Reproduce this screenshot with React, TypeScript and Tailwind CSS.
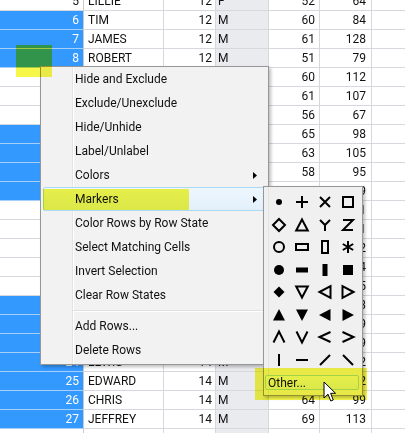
import React from 'react';

type Row = [number, string, number, string, number, number];

const rows: Row[] = [
  [5, 'LILLIE', 12, 'F', 52, 64],
  [6, 'TIM', 12, 'M', 60, 84],
  [7, 'JAMES', 12, 'M', 61, 128],
  [8, 'ROBERT', 12, 'M', 51, 79],
  [9, 'BARBARA', 13, 'F', 60, 112],
  [10, 'ALICE', 13, 'F', 61, 107],
  [11, 'SUSAN', 13, 'F', 56, 67],
  [12, 'JOHN', 13, 'M', 65, 98],
  [13, 'JOE', 13, 'M', 63, 105],
  [14, 'MICHAEL', 13, 'M', 58, 95],
  [15, 'DAVID', 13, 'M', 59, 79],
  [16, 'JUDY', 14, 'F', 61, 81],
  [17, 'ELIZABETH', 14, 'F', 62, 91],
  [18, 'LESLIE', 14, 'F', 65, 142],
  [19, 'CAROL', 14, 'F', 63, 84],
  [20, 'PATTY', 14, 'F', 62, 85],
  [21, 'FREDERICK', 14, 'M', 63, 93],
  [22, 'ALFRED', 14, 'M', 64, 99],
  [23, 'HENRY', 14, 'M', 65, 119],
  [24, 'LEWIS', 14, 'M', 64, 92],
  [25, 'EDWARD', 14, 'M', 68, 112],
  [26, 'CHRIS', 14, 'M', 64, 99],
  [27, 'JEFFREY', 14, 'M', 69, 113],
  [28, 'MARY', 15, 'F', 62, 92],
];

const S = { stroke: '#000', strokeWidth: 2, fill: 'none' } as const;
const F = { fill: '#000' } as const;

function markerShape(k: number) {
  switch (k) {
    case 0: return <circle cx="8" cy="8" r="3" {...F} />;
    case 1: return <path d="M2 8H14M8 2V14" {...S} />;
    case 2: return <path d="M3 3L13 13M13 3L3 13" {...S} />;
    case 3: return <rect x="3" y="3" width="10" height="10" {...S} />;
    case 4: return <polygon points="8,2 14,8 8,14 2,8" {...S} />;
    case 5: return <polygon points="8,2.5 13.8,13.5 2.2,13.5" {...S} />;
    case 6: return <path d="M3 3L8 8L13 3M8 8V14" {...S} />;
    case 7: return <path d="M3 3H13L3 13H13" {...S} />;
    case 8: return <circle cx="8" cy="8" r="5" {...S} />;
    case 9: return <rect x="2" y="5" width="12" height="6" {...S} />;
    case 10: return <rect x="5" y="2" width="6" height="12" {...S} />;
    case 11: return <path d="M8 2V14M2.8 5L13.2 11M13.2 5L2.8 11" {...S} />;
    case 12: return <circle cx="8" cy="8" r="5" {...F} />;
    case 13: return <rect x="2" y="5.5" width="12" height="5" {...F} />;
    case 14: return <rect x="5.5" y="2" width="5" height="12" {...F} />;
    case 15: return <rect x="3" y="3" width="10" height="10" {...F} />;
    case 16: return <polygon points="8,2.5 13.5,8 8,13.5 2.5,8" {...F} />;
    case 17: return <polygon points="2.2,2.5 13.8,2.5 8,13.5" {...S} />;
    case 18: return <polygon points="2.5,8 13.5,2.2 13.5,13.8" {...S} />;
    case 19: return <polygon points="13.5,8 2.5,2.2 2.5,13.8" {...S} />;
    case 20: return <polygon points="8,2 14,13.5 2,13.5" {...F} />;
    case 21: return <polygon points="2,2.5 14,2.5 8,14" {...F} />;
    case 22: return <polygon points="2,8 13.5,2 13.5,14" {...F} />;
    case 23: return <polygon points="14,8 2.5,2 2.5,14" {...F} />;
    case 24: return <path d="M2.5 13.5L8 2.5L13.5 13.5" {...S} />;
    case 25: return <path d="M2.5 2.5L8 13.5L13.5 2.5" {...S} />;
    case 26: return <path d="M13.5 3L2.5 8L13.5 13" {...S} />;
    case 27: return <path d="M2.5 3L13.5 8L2.5 13" {...S} />;
    case 28: return <path d="M8 2V14" {...S} />;
    case 29: return <path d="M2 8H14" {...S} />;
    case 30: return <path d="M3 13L13 3" {...S} />;
    default: return <path d="M3 3L13 13" {...S} />;
  }
}

function Arrow() {
  return (
    <svg width="4" height="7" viewBox="0 0 4 7" className="block">
      <polygon points="0,0 4,3.5 0,7" fill="#000" />
    </svg>
  );
}

const menuItems = [
  'Hide and Exclude',
  'Exclude/Unexclude',
  'Hide/Unhide',
  'Label/Unlabel',
  'Colors',
  'Markers',
  'Color Rows by Row State',
  'Select Matching Cells',
  'Invert Selection',
  'Clear Row States',
];

function MenuItem({ label, sub, active }: { label: string; sub?: boolean; active?: boolean }) {
  return (
    <div
      className={
        'mx-[2px] h-[24px] flex items-center justify-between pl-[31px] pr-[8px] border rounded-[2px] ' +
        (active ? 'border-[#a9d9f4] bg-[linear-gradient(#eef6fd,#e2f0fb)]' : 'border-transparent')
      }
    >
      <span>{label}</span>
      {sub ? <Arrow /> : null}
    </div>
  );
}

export default function App() {
  return (
    <div className="relative w-[405px] h-[433px] overflow-hidden bg-white text-[12px] text-[#111] font-['Roboto',sans-serif] leading-none">
      {/* data table */}
      <div className="-mt-[8px] flex flex-col">
        {rows.map((r) => {
          const sel = r[3] === 'M';
          return (
            <div key={r[0]} className="flex h-[19px]">
              <div
                className={
                  'w-[84px] shrink-0 flex items-center justify-end pr-[4px] border-r border-b border-r-[#c9c9d2] ' +
                  (sel ? 'bg-[#3399ff] text-white border-b-[#a7cff7]' : 'bg-white border-b-[#d7d7de]')
                }
              >
                {r[0]}
              </div>
              <div className="w-[80px] shrink-0 flex items-center pl-[4px] border-r border-b border-[#d7d7de]">{r[1]}</div>
              <div className="w-[52px] shrink-0 flex items-center justify-end pr-[3px] border-r border-b border-[#d7d7de]">{r[2]}</div>
              <div className="w-[53px] shrink-0 flex items-center pl-[2px] bg-[#e9ebef] border-r border-b border-[#d7d7de]">{r[3]}</div>
              <div className="w-[51px] shrink-0 flex items-center justify-end pr-[4px] border-r border-b border-[#d7d7de]">{r[4]}</div>
              <div className="w-[52px] shrink-0 flex items-center justify-end pr-[5px] border-r border-b border-[#d7d7de]">{r[5]}</div>
              <div className="flex-1 border-b border-[#d7d7de]" />
            </div>
          );
        })}
      </div>

      {/* context menu */}
      <div className="absolute left-[40px] top-[66px] w-[229px] border border-[#979797] pb-[2px] shadow-[2px_2px_3px_rgba(0,0,0,0.25)] bg-[linear-gradient(to_right,#f2f2f2_31px,#e2e3e3_31px,#e2e3e3_32px,#ffffff_32px,#ffffff_33px,#f2f2f2_33px)]">
        {menuItems.map((m) => (
          <MenuItem key={m} label={m} sub={m === 'Colors' || m === 'Markers'} active={m === 'Markers'} />
        ))}
        <div className="h-[7px] flex items-center pl-[32px]">
          <div className="w-full h-[2px] border-t border-t-[#e0e0e0] border-b border-b-white" />
        </div>
        <MenuItem label="Add Rows..." />
        <MenuItem label="Delete Rows" />
      </div>

      {/* markers submenu */}
      <div className="absolute left-[263px] top-[186px] w-[100px] border border-[#979797] shadow-[2px_2px_3px_rgba(0,0,0,0.25)] pt-[4px] pb-[5px] bg-[linear-gradient(to_right,#f0f0f0_4px,#e2e3e3_4px,#e2e3e3_5px,#f0f0f0_5px)]">
        <div className="grid grid-cols-[repeat(4,23px)] auto-rows-[22.5px] pl-[3px]">
          {Array.from({ length: 32 }).map((_, i) => (
            <div key={i} className="flex items-center justify-center">
              <svg width="16" height="16" viewBox="0 0 16 16" className="block">
                {markerShape(i)}
              </svg>
            </div>
          ))}
        </div>
        <div className="mt-[4px] ml-[1px] w-[94px] h-[15px] flex items-center pl-[2px] border border-[#a9d9f4] rounded-[2px] bg-[linear-gradient(#eef6fd,#e2f0fb)]">
          Other...
        </div>
      </div>

      {/* highlighter marks */}
      <div className="absolute left-[16px] top-[45px] w-[36px] h-[32px] bg-[#f7f74a] mix-blend-multiply" />
      <div className="absolute left-[43px] top-[189px] w-[146px] h-[21px] bg-[#f7f74a] mix-blend-multiply" />
      <div className="absolute left-[255px] top-[368px] w-[112px] h-[32px] bg-[#f7f74a] mix-blend-multiply" />

      {/* mouse pointer */}
      <svg className="absolute left-[323px] top-[381px]" width="14" height="22" viewBox="0 0 14 22">
        <path d="M1 1V17L5 13.2L7.8 20L10.3 19L7.6 12.3H12.6Z" fill="#fff" stroke="#000" strokeWidth="1" strokeLinejoin="miter" />
      </svg>
    </div>
  );
}
